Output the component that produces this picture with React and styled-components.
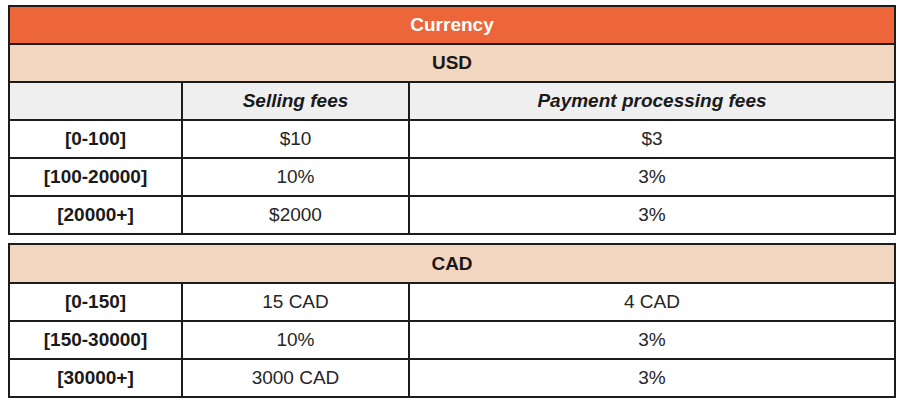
import styled, { createGlobalStyle } from "styled-components";

const GlobalStyle = createGlobalStyle`
  body {
    margin: 0;
    background: #ffffff;
    font-family: "Liberation Sans", Arial, sans-serif;
  }
`;

const Page = styled.div`
  padding: 5px 0 0 8px;
  display: flex;
  flex-direction: column;
  gap: 8px;
  width: 888px;
`;

const Table = styled.div`
  border: 2px solid #1c1c1c;
  display: flex;
  flex-direction: column;
`;

const Banner = styled.div`
  height: ${(p) => p.$h || 36}px;
  display: flex;
  align-items: center;
  justify-content: center;
  font-size: 19px;
  font-weight: bold;
  background: ${(p) => (p.$main ? "#ec6639" : "#f3d6c0")};
  color: ${(p) => (p.$main ? "#ffffff" : "#1a1a1a")};
  & + & {
    border-top: 2px solid #1c1c1c;
  }
`;

const Row = styled.div`
  display: grid;
  grid-template-columns: 171px 227px 1fr;
  height: 36px;
  border-top: 2px solid #1c1c1c;
  background: ${(p) => (p.$head ? "#efefef" : "#ffffff")};
`;

const Cell = styled.div`
  display: flex;
  align-items: center;
  justify-content: center;
  font-size: 19px;
  color: #262626;
  & + & {
    border-left: 2px solid #1c1c1c;
  }
`;

const Range = styled(Cell)`
  font-weight: bold;
  color: #1a1a1a;
`;

const HeadCell = styled(Cell)`
  font-weight: bold;
  font-style: italic;
  color: #1a1a1a;
`;

const usd = [
  ["[0-100]", "$10", "$3"],
  ["[100-20000]", "10%", "3%"],
  ["[20000+]", "$2000", "3%"],
];

const cad = [
  ["[0-150]", "15 CAD", "4 CAD"],
  ["[150-30000]", "10%", "3%"],
  ["[30000+]", "3000 CAD", "3%"],
];

function FeeRows({ rows }) {
  return rows.map(([range, selling, payment]) => (
    <Row key={range}>
      <Range>{range}</Range>
      <Cell>{selling}</Cell>
      <Cell>{payment}</Cell>
    </Row>
  ));
}

export default function App() {
  return (
    <>
      <GlobalStyle />
      <Page>
        <Table>
          <Banner $main>Currency</Banner>
          <Banner>USD</Banner>
          <Row $head>
            <HeadCell />
            <HeadCell>Selling fees</HeadCell>
            <HeadCell>Payment processing fees</HeadCell>
          </Row>
          <FeeRows rows={usd} />
        </Table>
        <Table>
          <Banner $h={37}>CAD</Banner>
          <FeeRows rows={cad} />
        </Table>
      </Page>
    </>
  );
}
